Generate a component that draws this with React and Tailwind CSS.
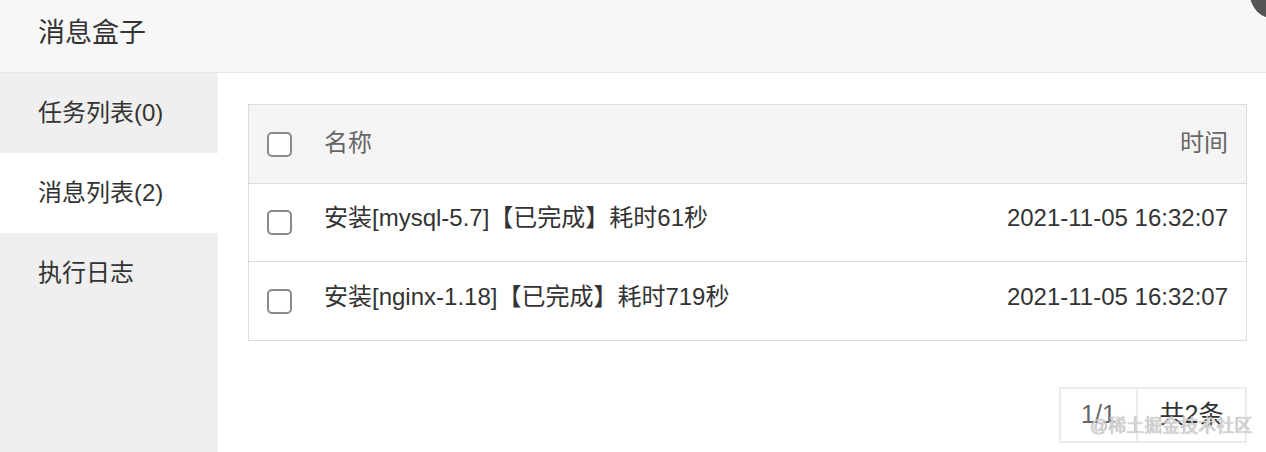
export default function App() {
  const font = { fontFamily: '"Liberation Sans", "Noto Sans CJK SC", sans-serif' };
  const Box = () => (
    <div className="w-[25px] h-[25px] rounded-[5px] border-2 border-[#8a8a8a] bg-white shrink-0" />
  );
  const rows = [
    { name: "安装[mysql-5.7]【已完成】耗时61秒", time: "2021-11-05 16:32:07" },
    { name: "安装[nginx-1.18]【已完成】耗时719秒", time: "2021-11-05 16:32:07" },
  ];
  return (
    <div className="relative w-[1266px] h-[452px] overflow-hidden bg-white text-[#333]" style={font}>
      <div className="h-[73px] bg-[#f7f7f7] border-b border-[#e6e6e6] flex items-center pl-[38px] pb-[6px]">
        <span className="text-[27px]">消息盒子</span>
      </div>
      <div className="absolute right-[-34px] top-[-31px] w-[50px] h-[50px] rounded-full bg-[#555]" />
      <div className="flex h-[379px]">
        <div className="w-[218px] bg-[#efefef] flex flex-col text-[24px]">
          <div className="h-[80px] flex items-center pl-[38px]">任务列表(0)</div>
          <div className="h-[80px] flex items-center pl-[38px] bg-white">消息列表(2)</div>
          <div className="h-[80px] flex items-center pl-[38px]">执行日志</div>
        </div>
        <div className="flex-1 pl-[30px] pr-[19px] pt-[31px]">
          <div className="border border-[#dcdcdc] text-[24px]">
            <div className="h-[79px] bg-[#f5f5f5] border-b border-[#dcdcdc] flex items-center pl-[18px] pr-[18px] text-[#666]">
              <Box />
              <span className="ml-[32px] flex-1 pb-[3px]">名称</span>
              <span className="pb-[3px]">时间</span>
            </div>
            {rows.map((r, i) => (
              <div
                key={i}
                className={`h-[78px] flex items-center pl-[18px] pr-[18px] ${i === 0 ? "border-b border-[#dcdcdc]" : ""}`}
              >
                <Box />
                <span className="ml-[32px] flex-1 pb-[9px]">{r.name}</span>
                <span className="pb-[9px]">{r.time}</span>
              </div>
            ))}
          </div>
          <div className="flex justify-end mt-[46px]">
            <div className="flex h-[56px] border-2 border-[#ececec] text-[25px]">
              <div className="w-[77px] flex items-center justify-center text-[#666] border-r-2 border-[#ececec]">1/1</div>
              <div className="w-[107px] flex items-center justify-center text-[#333]">共2条</div>
            </div>
          </div>
        </div>
      </div>
      <div
        className="absolute left-[1090px] top-[413px] text-[18px] text-[#d6d6d6]"
        style={{ textShadow: "0 0 1px #8a8a8a" }}
      >
        @稀土掘金技术社区
      </div>
    </div>
  );
}
